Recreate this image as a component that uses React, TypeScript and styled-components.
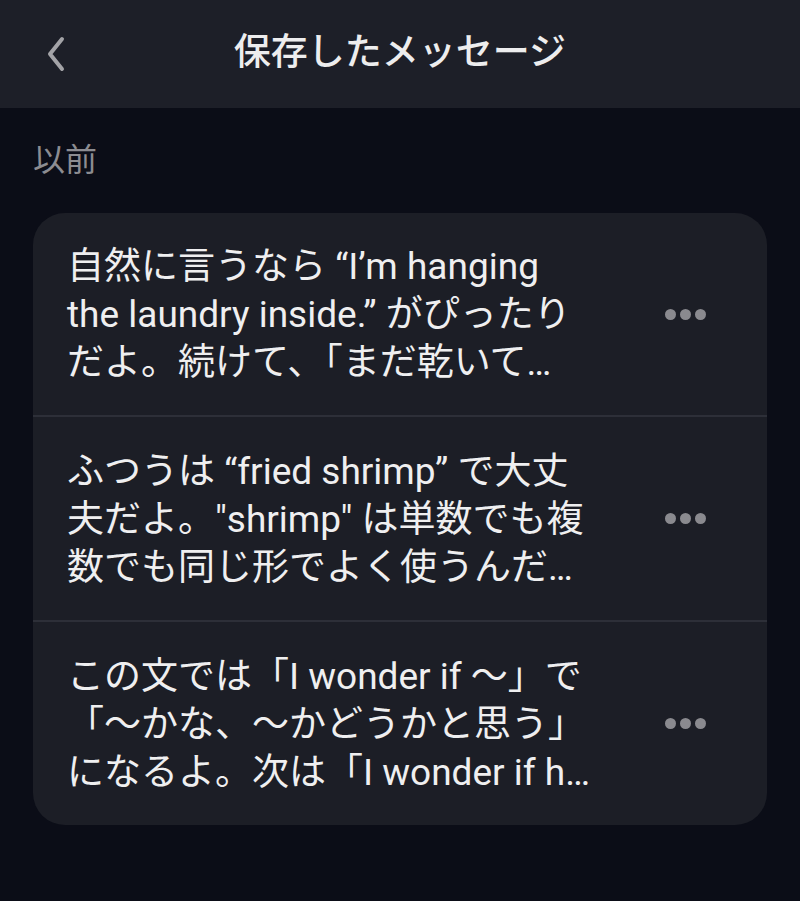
import styled, { createGlobalStyle } from "styled-components";

const GlobalStyle = createGlobalStyle`
    html, body {
        margin: 0;
        padding: 0;
        background: #0b0d17;
    }
    body {
        font-family: Roboto, "Noto Sans CJK JP", sans-serif;
        -webkit-font-smoothing: antialiased;
    }
`;

const Screen = styled.div`
    width: 800px;
    min-height: 901px;
    background: #0b0d17;
    display: flex;
    flex-direction: column;
`;

const Header = styled.header`
    height: 108px;
    background: #1d1f28;
    display: grid;
    grid-template-columns: 120px 1fr 120px;
    align-items: center;
`;

const BackButton = styled.button`
    justify-self: start;
    margin-left: 36px;
    width: 40px;
    height: 50px;
    padding: 0;
    border: none;
    background: transparent;
    display: flex;
    align-items: center;
    justify-content: center;
    cursor: pointer;
`;

const Title = styled.h1`
    margin: 0;
    text-align: center;
    color: #ededee;
    font-size: 37px;
    font-weight: 500;
    letter-spacing: 0;
    padding-bottom: 10px;
`;

const Content = styled.main`
    padding: 32px 33px 0;
    display: flex;
    flex-direction: column;
`;

const SectionLabel = styled.div`
    color: #8c8c91;
    font-size: 32px;
    line-height: 40px;
    margin-bottom: 33px;
`;

const Card = styled.div`
    background: #1c1e26;
    border-radius: 32px;
    overflow: hidden;
    display: flex;
    flex-direction: column;
`;

const Row = styled.div`
    height: 202px;
    display: flex;
    align-items: center;
    padding: 0 61px 0 34px;
    & + & {
        border-top: 2px solid #2d2f38;
        height: 203px;
    }
`;

const Message = styled.div`
    flex: 1;
    color: #efeff0;
    font-size: 37px;
    line-height: 48px;
    padding-top: 2px;
`;

const Line = styled.div`
    white-space: nowrap;
`;

const MoreButton = styled.button`
    border: none;
    background: transparent;
    padding: 6px 0;
    display: flex;
    gap: 4px;
    cursor: pointer;
`;

const Dot = styled.span`
    width: 11px;
    height: 11px;
    border-radius: 50%;
    background: #8a8a8f;
`;

const messages: string[][] = [
    [
        "自然に言うなら “I’m hanging",
        "the laundry inside.” がぴったり",
        "だよ。続けて、「まだ乾いて…",
    ],
    [
        "ふつうは “fried shrimp” で大丈",
        "夫だよ。\"shrimp\" は単数でも複",
        "数でも同じ形でよく使うんだ…",
    ],
    [
        "この文では「I wonder if 〜」で",
        "「〜かな、〜かどうかと思う」",
        "になるよ。次は「I wonder if h…",
    ],
];

const App = () => {
    return (
        <Screen>
            <GlobalStyle />
            <Header>
                <BackButton aria-label="戻る">
                    <svg width="24" height="36" viewBox="0 0 24 36" fill="none">
                        <path
                            d="M18 3 L6 18 L18 33"
                            stroke="#a3a3a7"
                            strokeWidth="4"
                            strokeLinecap="round"
                            strokeLinejoin="round"
                        />
                    </svg>
                </BackButton>
                <Title>保存したメッセージ</Title>
                <div />
            </Header>
            <Content>
                <SectionLabel>以前</SectionLabel>
                <Card>
                    {messages.map((lines, i) => (
                        <Row key={i}>
                            <Message>
                                {lines.map((l, j) => (
                                    <Line key={j}>{l}</Line>
                                ))}
                            </Message>
                            <MoreButton aria-label="その他">
                                <Dot />
                                <Dot />
                                <Dot />
                            </MoreButton>
                        </Row>
                    ))}
                </Card>
            </Content>
        </Screen>
    );
};

export default App;
